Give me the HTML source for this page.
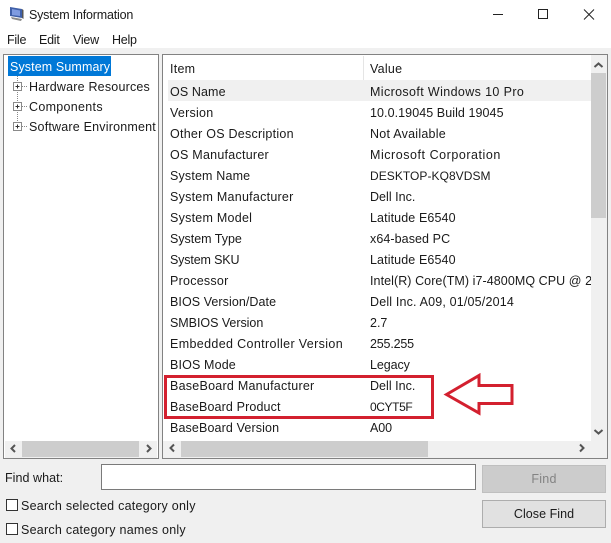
<!DOCTYPE html>
<html><head><meta charset="utf-8">
<style>
html,body{margin:0;padding:0}
body{width:611px;height:543px;position:relative;overflow:hidden;background:#f0f0f0;font-family:"Liberation Sans",sans-serif;font-size:12.5px;color:#1a1a1a;letter-spacing:.25px}
div{position:absolute;box-sizing:border-box}
.t{white-space:nowrap;line-height:16px;height:16px}
.panel{background:#fff;border:1px solid #828282}
.sb{background:#f0f0f0}
.th{background:#cdcdcd}
svg{position:absolute;overflow:visible}
</style></head><body>
<div style="left:0;top:0;width:611px;height:48px;background:#fff"></div>
<svg style="left:9px;top:6px" width="15" height="16" viewBox="0 0 15 16"><path d="M1 1L13 3V12L1 10Z" fill="#3f5fa8"/><path d="M3 3L11 4.500V10L3 9Z" fill="#7f9be0"/><path d="M2 11L13 13L12 15L3 13Z" fill="#8a8a8a"/><path d="M13 3L14.500 4V13L13 12Z" fill="#555"/></svg>
<div class="t" style="left:29px;top:7px;letter-spacing:-.2px">System Information</div>
<div class="t" style="left:7px;top:32px;letter-spacing:-.25px">File</div>
<div class="t" style="left:39px;top:32px;letter-spacing:-.25px">Edit</div>
<div class="t" style="left:73px;top:32px;letter-spacing:-.25px">View</div>
<div class="t" style="left:112px;top:32px;letter-spacing:-.25px">Help</div>
<svg style="left:490px;top:8px" width="100" height="14"><path d="M3 6.500H13" stroke="#222" fill="none"/><rect x="48.500" y="1.500" width="9" height="9" stroke="#222" fill="none"/><path d="M94 1.500L104 11.500M104 1.500L94 11.500" stroke="#222" fill="none"/></svg>

<div class="panel" style="left:3px;top:54px;width:156px;height:405px"></div>
<div style="left:8px;top:56px;width:103px;height:20px;background:#0078d7"></div>
<div class="t" style="left:10px;top:59px;color:#fff;letter-spacing:.11px">System Summary</div>
<svg style="left:13px;top:76px" width="16" height="60"><path d="M4.500 0V50" stroke="#888" stroke-dasharray="1 1"/><path d="M9 10.500H15M9 30.500H15M9 50.500H15" stroke="#888" stroke-dasharray="1 1"/><g fill="#fff" stroke="#8a8a8a"><rect x=".5" y="6.500" width="8" height="8"/><rect x=".5" y="26.500" width="8" height="8"/><rect x=".5" y="46.500" width="8" height="8"/></g><path d="M2.500 10.500H6.500M4.500 8.500V12.500M2.500 30.500H6.500M4.500 28.500V32.500M2.500 50.500H6.500M4.500 48.500V52.500" stroke="#333"/></svg>
<div class="t" style="left:29px;top:79px;letter-spacing:.2px">Hardware Resources</div>
<div class="t" style="left:29px;top:99px;letter-spacing:.3px">Components</div>
<div class="t" style="left:29px;top:119px;letter-spacing:.2px">Software Environment</div>
<div class="sb" style="left:5px;top:441px;width:152px;height:17px"></div>
<div class="th" style="left:22px;top:441px;width:117px;height:16px"></div>
<svg style="left:10px;top:444px" width="144" height="9"><path d="M5 1L1.500 4.500L5 8M137 1L140.500 4.500L137 8" stroke="#555" stroke-width="2" fill="none"/></svg>

<div class="panel" style="left:162px;top:54px;width:446px;height:405px"></div>
<div style="left:363px;top:56px;width:1px;height:24px;background:#e5e5e5"></div>
<div class="t" style="left:170px;top:61px">Item</div>
<div class="t" style="left:370px;top:61px">Value</div>
<div style="left:168px;top:80px;width:423px;height:21px;background:#f0f0f0"></div>

<div class="t" style="left:170px;top:84px;letter-spacing:.11px">OS Name</div><div class="t" style="left:370px;top:84px;letter-spacing:.375px">Microsoft Windows 10 Pro</div>
<div class="t" style="left:170px;top:105px">Version</div><div class="t" style="left:370px;top:105px;letter-spacing:.07px">10.0.19045 Build 19045</div>
<div class="t" style="left:170px;top:126px">Other OS Description</div><div class="t" style="left:370px;top:126px">Not Available</div>
<div class="t" style="left:170px;top:147px">OS Manufacturer</div><div class="t" style="left:370px;top:147px;letter-spacing:.54px">Microsoft Corporation</div>
<div class="t" style="left:170px;top:168px;letter-spacing:.16px">System Name</div><div class="t" style="left:370px;top:168px;font-size:12px;letter-spacing:.05px">DESKTOP-KQ8VDSM</div>
<div class="t" style="left:170px;top:189px">System Manufacturer</div><div class="t" style="left:370px;top:189px;letter-spacing:.03px">Dell Inc.</div>
<div class="t" style="left:170px;top:210px">System Model</div><div class="t" style="left:370px;top:210px;letter-spacing:.11px">Latitude E6540</div>
<div class="t" style="left:170px;top:231px;letter-spacing:-.02px">System Type</div><div class="t" style="left:370px;top:231px;letter-spacing:.08px">x64-based PC</div>
<div class="t" style="left:170px;top:252px;letter-spacing:-.15px">System SKU</div><div class="t" style="left:370px;top:252px;letter-spacing:.11px">Latitude E6540</div>
<div class="t" style="left:170px;top:273px">Processor</div><div class="t" style="left:370px;top:273px;width:221px;overflow:hidden;letter-spacing:.07px">Intel(R) Core(TM) i7-4800MQ CPU @ 2.70GHz</div>
<div class="t" style="left:170px;top:294px;letter-spacing:.07px">BIOS Version/Date</div><div class="t" style="left:370px;top:294px;letter-spacing:.17px">Dell Inc. A09, 01/05/2014</div>
<div class="t" style="left:170px;top:315px;letter-spacing:-.04px">SMBIOS Version</div><div class="t" style="left:370px;top:315px;letter-spacing:0">2.7</div>
<div class="t" style="left:170px;top:336px;letter-spacing:.36px">Embedded Controller Version</div><div class="t" style="left:370px;top:336px;letter-spacing:-.18px">255.255</div>
<div class="t" style="left:170px;top:357px;letter-spacing:.14px">BIOS Mode</div><div class="t" style="left:370px;top:357px;letter-spacing:-.08px">Legacy</div>
<div class="t" style="left:170px;top:378px">BaseBoard Manufacturer</div><div class="t" style="left:370px;top:378px;letter-spacing:.03px">Dell Inc.</div>
<div class="t" style="left:170px;top:399px;letter-spacing:.13px">BaseBoard Product</div><div class="t" style="left:370px;top:399px;font-size:12px;letter-spacing:-.4px">0CYT5F</div>
<div class="t" style="left:170px;top:420px;letter-spacing:.13px">BaseBoard Version</div><div class="t" style="left:370px;top:420px;letter-spacing:-.08px">A00</div>

<div class="sb" style="left:591px;top:55px;width:16px;height:386px"></div>
<div class="th" style="left:591px;top:73px;width:15px;height:145px"></div>
<div class="sb" style="left:163px;top:441px;width:444px;height:17px"></div>
<div class="th" style="left:181px;top:441px;width:247px;height:16px"></div>
<svg style="left:168px;top:60px" width="436" height="395"><path d="M426.500 7L430.500 3.500L434.500 7M426.500 370L430.500 373.500L434.500 370" stroke="#555" stroke-width="2" fill="none"/><path d="M6 384.500L2.500 388L6 391.500M412 384.500L415.500 388L412 391.500" stroke="#555" stroke-width="2" fill="none"/></svg>

<div style="left:164px;top:375px;width:270px;height:44px;border:3px solid #d3202f"></div>
<svg style="left:443px;top:372px" width="74" height="46"><path d="M3.500 22.500L36 3.500V13.500H69V31.500H36V41Z" fill="none" stroke="#d3202f" stroke-width="3"/></svg>

<div class="t" style="left:5px;top:470px;letter-spacing:.05px">Find what:</div>
<div style="left:101px;top:464px;width:375px;height:26px;background:#fff;border:1px solid #7a7a7a"></div>
<div style="left:482px;top:465px;width:124px;height:28px;background:#cccccc;border:1px solid #bfbfbf"></div>
<div class="t" style="left:482px;top:471px;width:124px;text-align:center;color:#838383">Find</div>
<div style="left:482px;top:500px;width:124px;height:28px;background:#e1e1e1;border:1px solid #adadad"></div>
<div class="t" style="left:482px;top:506px;width:124px;text-align:center;letter-spacing:.05px">Close Find</div>
<div style="left:6px;top:499px;width:12px;height:12px;background:#fff;border:1px solid #333"></div>
<div class="t" style="left:21px;top:498px">Search selected category only</div>
<div style="left:6px;top:523px;width:12px;height:12px;background:#fff;border:1px solid #333"></div>
<div class="t" style="left:21px;top:522px">Search category names only</div>
</body></html>
